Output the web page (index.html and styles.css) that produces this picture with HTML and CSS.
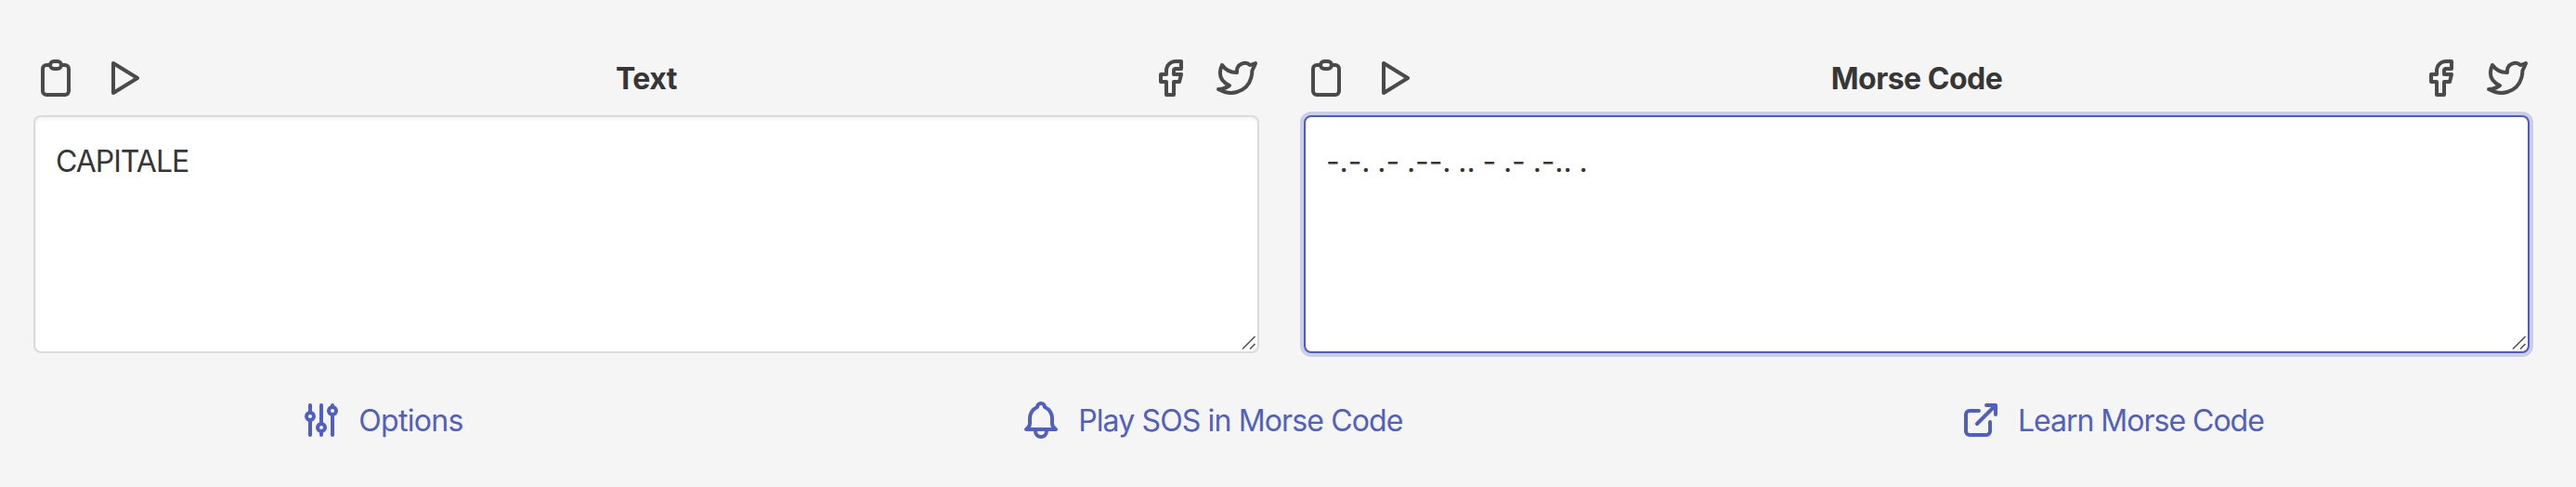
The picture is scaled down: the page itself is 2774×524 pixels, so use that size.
FILE: index.html
```
<!DOCTYPE html>
<html lang="en">
<head>
<meta charset="utf-8">
<title>Morse Code Translator</title>
<link rel="stylesheet" href="styles.css">
</head>
<body>
<svg class="sprite" aria-hidden="true">
  <symbol id="clipboard" viewBox="0 0 24 24"><path d="M9 5H7a2 2 0 0 0-2 2v12a2 2 0 0 0 2 2h10a2 2 0 0 0 2-2V7a2 2 0 0 0-2-2h-2"/><rect x="9" y="3" width="6" height="4" rx="2"/></symbol>
  <symbol id="play" viewBox="0 0 24 24"><path d="M7 4v16l13-8z"/></symbol>
  <symbol id="facebook" viewBox="0 0 24 24"><path d="M7 10v4h3v7h4v-7h3l1-4h-4V8a1 1 0 0 1 1-1h3V3h-3a5 5 0 0 0-5 5v2H7"/></symbol>
  <symbol id="twitter" viewBox="0 0 24 24"><path d="M22 4.01c-1 .49-1.98.689-3 .99-1.121-1.265-2.783-1.335-4.38-.737S11.977 6.323 12 8v1c-3.245.083-6.135-1.395-8-4 0 0-4.182 7.433 4 11-1.872 1.247-3.739 2.088-6 2 3.308 1.803 6.913 2.423 10.034 1.517 3.58-1.04 6.522-3.723 7.651-7.742a13.84 13.84 0 0 0 .497-3.753C20.18 7.773 21.692 5.25 22 4.009z"/></symbol>
  <symbol id="sliders" viewBox="0 0 24 24"><circle cx="6" cy="10" r="2"/><path d="M6 4v4M6 12v8"/><circle cx="12" cy="16" r="2"/><path d="M12 4v10M12 18v2"/><circle cx="18" cy="7" r="2"/><path d="M18 4v1M18 9v11"/></symbol>
  <symbol id="bell" viewBox="0 0 24 24"><path d="M10 5a2 2 0 0 1 4 0a7 7 0 0 1 4 6v3a4 4 0 0 0 2 3H4a4 4 0 0 0 2-3v-3a7 7 0 0 1 4-6M9 17v1a3 3 0 0 0 6 0v-1"/></symbol>
  <symbol id="external" viewBox="0 0 24 24"><path d="M11 7H6a2 2 0 0 0-2 2v9a2 2 0 0 0 2 2h9a2 2 0 0 0 2-2v-5M10 14L20 4M15 4h5v5"/></symbol>
  <symbol id="grip" viewBox="0 0 16 16"><path d="M1 14.5l13.5-13.5M9 14.5l5.5-5.5"/></symbol>
</svg>
<main class="panels">
  <section class="panel">
    <header class="toolbar">
      <div class="actions"><svg class="icon"><use href="#clipboard"/></svg><svg class="icon"><use href="#play"/></svg></div>
      <h2 class="title">Text</h2>
      <div class="actions"><svg class="icon"><use href="#facebook"/></svg><svg class="icon"><use href="#twitter"/></svg></div>
    </header>
    <div class="field">
      <textarea class="input" spellcheck="false">CAPITALE</textarea>
      <svg class="grip"><use href="#grip"/></svg>
    </div>
  </section>
  <section class="panel">
    <header class="toolbar">
      <div class="actions"><svg class="icon"><use href="#clipboard"/></svg><svg class="icon"><use href="#play"/></svg></div>
      <h2 class="title">Morse Code</h2>
      <div class="actions"><svg class="icon"><use href="#facebook"/></svg><svg class="icon"><use href="#twitter"/></svg></div>
    </header>
    <div class="field">
      <textarea class="input input-active" spellcheck="false">-.-. .- .--. .. - .- .-.. .</textarea>
      <svg class="grip"><use href="#grip"/></svg>
    </div>
  </section>
</main>
<nav class="links">
  <a class="link"><svg class="icon"><use href="#sliders"/></svg><span class="label label-options">Options</span></a>
  <a class="link"><svg class="icon"><use href="#bell"/></svg><span class="label">Play SOS in Morse Code</span></a>
  <a class="link"><svg class="icon"><use href="#external"/></svg><span class="label label-learn">Learn Morse Code</span></a>
</nav>
</body>
</html>
```
FILE: styles.css
```
* { box-sizing: border-box; }
body {
  margin: 0;
  height: 524px;
  overflow: hidden;
  background: #f5f5f5;
  color: #363636;
  font: 32px/48px Inter, sans-serif;
}
.sprite { display: none; }
.panels {
  display: grid;
  grid-template-columns: 1320px 1320px;
  gap: 48px;
  padding: 60px 0 0 36px;
}
.toolbar {
  display: grid;
  grid-template-columns: 1fr auto 1fr;
  height: 48px;
  margin-bottom: 16px;
  color: #4a4a4a;
}
.actions { display: flex; gap: 24px; }
.actions:last-child { justify-content: flex-end; }
.title {
  margin: 0;
  padding-top: 1px;
  color: #363636;
  font-size: 32px;
  font-weight: 700;
  letter-spacing: -0.5px;
}
.icon {
  display: block;
  flex: none;
  width: 48px;
  height: 48px;
  fill: none;
  stroke: currentColor;
  stroke-width: 2;
  stroke-linecap: round;
  stroke-linejoin: round;
}
.field { position: relative; height: 256px; }
.input {
  display: block;
  width: 100%;
  height: 100%;
  padding: 24px 22px 20px;
  border: 2px solid #dbdbdb;
  border-radius: 8px;
  outline: none;
  resize: none;
  background: #fff;
  box-shadow: inset 0 2px 4px rgba(10, 10, 10, 0.05);
  color: #363636;
  font: inherit;
  letter-spacing: -1px;
}
.input-active {
  border-color: #4b5bc2;
  box-shadow: 0 0 0 4px rgba(75, 91, 194, 0.25);
  letter-spacing: -0.13px;
  word-spacing: -0.9px;
}
.grip {
  position: absolute;
  right: 3px;
  bottom: 3px;
  width: 16px;
  height: 16px;
  fill: none;
  stroke: #555;
  stroke-width: 1.6;
}
.links {
  display: flex;
  justify-content: space-around;
  width: 2714px;
  margin: 48px 0 0 23px;
}
.link {
  display: flex;
  gap: 16px;
  color: #4f5fc4;
  white-space: nowrap;
}
.label {
  padding-top: 1px;
  letter-spacing: -0.86px;
}
.label-options { letter-spacing: -0.65px; }
.label-learn { letter-spacing: -1px; }
```
